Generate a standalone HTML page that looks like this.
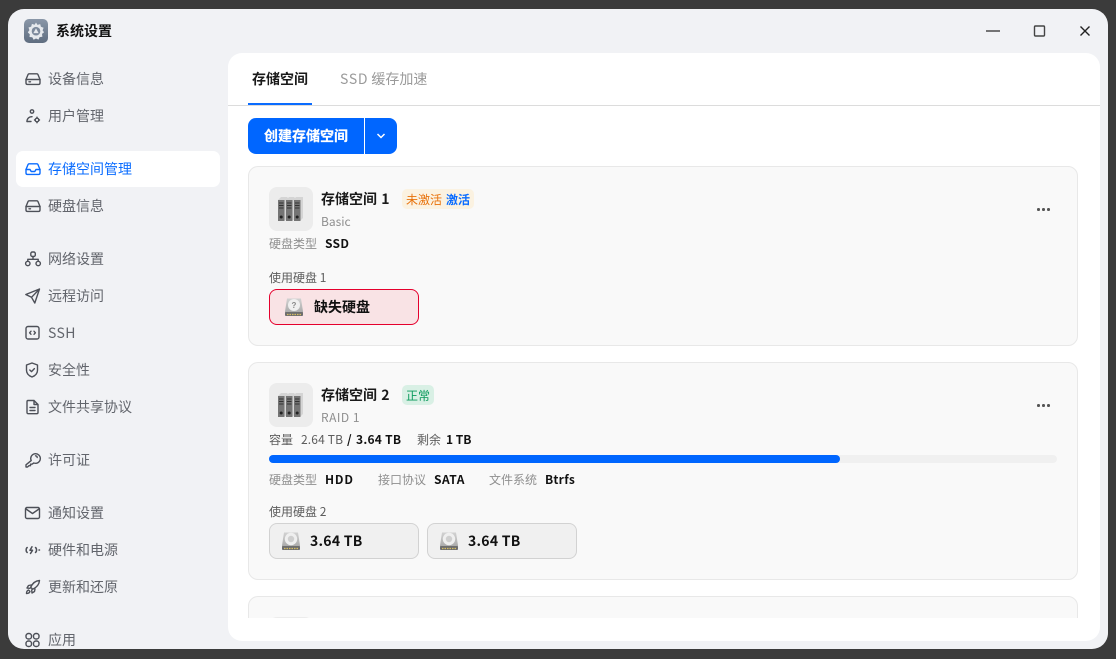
<!DOCTYPE html>
<html lang="zh"><head><meta charset="utf-8"><title>系统设置</title>
<style>
*{box-sizing:border-box;margin:0;padding:0}
html,body{width:1116px;height:659px;overflow:hidden;background:#3b3b3b;font-family:"Noto Sans CJK SC","Liberation Sans",sans-serif}
.abs,.t,svg.i{position:absolute}
.t{white-space:nowrap;line-height:20px;height:20px}
#win{position:absolute;left:8px;top:9px;width:1100px;height:640px;background:#f1f2f5;border-radius:16px;overflow:hidden}
#root{position:absolute;left:0;top:0;width:1116px;height:659px}
.nav{font-size:14px;color:#62656c;left:48px}
svg.i{width:18px;height:18px;left:24px;fill:none;stroke:#4d5058;stroke-width:1.4;stroke-linecap:round;stroke-linejoin:round}
#panel{position:absolute;left:228px;top:53px;width:872px;height:588px;background:#fff;border-radius:14px;overflow:hidden}
.card{position:absolute;left:248px;width:830px;background:#f9f9f9;border:1px solid #e8e8e8;border-radius:10px}
.g{font-size:12px;color:#8f8f8f}
.d{font-size:12px;color:#5c5c5c}
.b{font-size:12px;color:#111;font-weight:700;letter-spacing:.5px}
.title{font-size:14px;color:#1a1a1a;font-weight:700}
.ic{position:absolute;left:269px;width:44px;height:44px;background:#ececec;border-radius:8px}
.disk{position:absolute;height:36px;width:150px;border-radius:8px;border:1px solid #d2d2d2;background:#f0f0f0}
.dots{position:absolute;left:1037px;width:2.5px;height:2.5px;border-radius:50%;background:#555;box-shadow:5px 0 0 #555,10px 0 0 #555}
.num{font-size:14px;color:#111;font-weight:700;letter-spacing:.25px}
</style></head><body>
<div id="root">
<div id="win"></div>

<!-- title bar -->
<svg class="abs" style="left:24px;top:19px" width="24" height="24" viewBox="0 0 24 24">
<defs>
<linearGradient id="ag" x1="0" y1="0" x2="0" y2="1"><stop offset="0" stop-color="#8a97a8"/><stop offset="1" stop-color="#5f6d80"/></linearGradient>
<linearGradient id="dg" x1="0" y1="0" x2="0" y2="1"><stop offset="0" stop-color="#d2d2d2"/><stop offset="1" stop-color="#a2a2a2"/></linearGradient>
</defs>
<rect width="24" height="24" rx="5" fill="url(#ag)"/>
<path d="M12 3.500l1.500 2.400 2.700-.8.7 2.700 2.700 1-1 2.600 1.500 1.800-2.100 1.700.4 2.800-2.800.4-1.100 2.500-2.500-1.100-2.400 1.300-1.300-2.500-2.800-.3.300-2.800-2-1.800 1.600-2.300-.9-2.600 2.700-.9.700-2.700 2.700.8z" fill="#e6e9ed"/>
<circle cx="12" cy="12.200" r="4.300" fill="#7c899b"/><path d="M12 9.200l2.600 4.900h-5.200z" fill="#e6e9ed"/>
</svg>
<div class="t" style="left:56px;top:21px;font-size:14px;color:#111;font-weight:700">系统设置</div>
<svg class="abs" style="left:980px;top:20px" width="120" height="22" viewBox="0 0 120 22" fill="none">
<path d="M6 11h14" stroke="#555" stroke-width="1.600"/>
<rect x="54.500" y="6" width="10" height="10" rx="1" stroke="#444" stroke-width="1.400"/>
<path d="M100.500 6.500l9 9M109.500 6.500l-9 9" stroke="#222" stroke-width="1.400"/>
</svg>

<!-- sidebar -->
<div class="abs" style="left:16px;top:151px;width:204px;height:36px;background:#fff;border-radius:7px"></div>

<svg class="i" style="top:70px" viewBox="0 0 18 18"><path d="M2 9.500L4 4.600c.2-.5.6-.8 1.200-.8h7.600c.6 0 1 .3 1.200.8l2 4.900v3.500c0 .8-.6 1.400-1.400 1.400H3.400c-.8 0-1.400-.6-1.400-1.400z"/><path d="M2 9.500h14M5 11.800h1.500"/></svg>
<div class="t nav" style="top:69px">设备信息</div>
<svg class="i" style="top:107px" viewBox="0 0 18 18"><circle cx="8" cy="4.500" r="1.700"/><path d="M3 14.500c0-2.800 2-4.800 5-4.800"/><path d="M3 14.500h4"/><circle cx="13" cy="13" r="1.800"/><path d="M13 10.200v.9M13 14.900v.9M10.500 13h.7M14.800 13h.7"/></svg>
<div class="t nav" style="top:106px">用户管理</div>
<svg class="i" style="top:160px;stroke:#0a6cff" viewBox="0 0 18 18"><path d="M2 9.500L4 4.600c.2-.5.6-.8 1.200-.8h7.600c.6 0 1 .3 1.200.8l2 4.900v3.500c0 .8-.6 1.400-1.400 1.400H3.400c-.8 0-1.400-.6-1.400-1.400z"/><path d="M2 9.500h4l1.200 2h3.600l1.200-2h4"/></svg>
<div class="t nav" style="top:159px;color:#0a6cff">存储空间管理</div>
<svg class="i" style="top:197px" viewBox="0 0 18 18"><path d="M2 9.500L4 4.600c.2-.5.6-.8 1.200-.8h7.600c.6 0 1 .3 1.200.8l2 4.900v3.500c0 .8-.6 1.400-1.400 1.400H3.400c-.8 0-1.400-.6-1.400-1.400z"/><path d="M2 9.500h14M5 11.800h1.500"/></svg>
<div class="t nav" style="top:196px">硬盘信息</div>

<svg class="i" style="top:250px" viewBox="0 0 18 18"><rect x="6.800" y="2" width="4.500" height="4.500" rx="1.500"/><circle cx="3.800" cy="13.500" r="2.200"/><circle cx="14.200" cy="13.500" r="2.200"/><path d="M9 6.500v2.800M3.800 11.300V9.300h10.400v2"/></svg>
<div class="t nav" style="top:249px">网络设置</div>
<svg class="i" style="top:287px" viewBox="0 0 18 18"><path d="M15.500 2L1.800 7.500l5.700 2.800L10.800 16zM15.500 2L7.500 10.300"/></svg>
<div class="t nav" style="top:286px">远程访问</div>
<svg class="i" style="top:324px" viewBox="0 0 18 18"><rect x="2" y="2.500" width="13" height="12.500" rx="2"/><path d="M7 7.200L5.600 8.800 7 10.300M10 7.200l1.400 1.600L10 10.300"/></svg>
<div class="t nav" style="top:323px;letter-spacing:.4px">SSH</div>
<svg class="i" style="top:361px" viewBox="0 0 18 18"><path d="M8 2l5.500 2v5.200c0 3.200-2.300 5.500-5.500 6.800-3.200-1.300-5.500-3.600-5.500-6.800V4z"/><path d="M5.800 9l1.700 1.600 2.900-3"/></svg>
<div class="t nav" style="top:360px">安全性</div>
<svg class="i" style="top:398px" viewBox="0 0 18 18"><path d="M4 2.500h6l4 4v8c0 .7-.5 1.200-1.200 1.200H4.200c-.7 0-1.200-.5-1.200-1.200V3.700C3 3 3.400 2.500 4 2.500zM10 2.500v4h4M6 9.500h5M6 12.500h5"/></svg>
<div class="t nav" style="top:397px">文件共享协议</div>

<svg class="i" style="top:451px" viewBox="0 0 18 18"><path d="M7.200 9.600A4.800 4.800 0 1 1 9.800 12L8 13.200H6.500v1.500H5L3.500 16H2v-2.200z"/><path d="M11.500 4.800a1.800 1.800 0 0 1 1.700 1.700"/></svg>
<div class="t nav" style="top:450px">许可证</div>
<svg class="i" style="top:504px" viewBox="0 0 18 18"><rect x="1.500" y="3.500" width="14" height="11" rx="1.500"/><path d="M2 5l6.500 4.500L15 5"/></svg>
<div class="t nav" style="top:503px">通知设置</div>
<svg class="i" style="top:541px;stroke-width:1.500" viewBox="0 0 18 18"><path d="M3.200 6.500C1.800 7.500 1.800 10.500 3.200 11.500M11.500 6.500c1.400 1 1.400 4 0 5M8 5.800L6 9.300h2.500L6.500 12.500"/><path d="M15 9h.5"/></svg>
<div class="t nav" style="top:540px">硬件和电源</div>
<svg class="i" style="top:578px" viewBox="0 0 18 18"><path d="M15.500 2.500c-4 .3-7 2.800-8.800 6.700l2 2c3.900-1.800 6.500-4.800 6.800-8.700zM7 7L4.500 7.500 3 10l3 .3M11 11l-.5 2.500L8 15l-.3-3"/><path d="M4.500 12c-1.300.5-2 2-2 3.500 1.500 0 3-.7 3.500-2z"/></svg>
<div class="t nav" style="top:577px">更新和还原</div>
<svg class="i" style="top:631px" viewBox="0 0 18 18"><rect x="2" y="2.500" width="5.500" height="5.500" rx="2.400"/><rect x="9.500" y="2.500" width="5.500" height="5.500" rx="2.400"/><rect x="2" y="10" width="5.500" height="5.500" rx="2.400"/><rect x="9.500" y="10" width="5.500" height="5.500" rx="2.400"/></svg>
<div class="t nav" style="top:630px">应用</div>
<div class="abs" style="left:0;top:649px;width:1116px;height:10px;background:#3b3b3b"></div>

<!-- panel -->
<div id="panel"></div>
<div class="t" style="left:252px;top:69px;font-size:14px;color:#1a1a1a;font-weight:700">存储空间</div>
<div class="t" style="left:340px;top:69px;font-size:14px;color:#9a9a9a"><span style="letter-spacing:.7px">SSD</span> 缓存加速</div>
<div class="abs" style="left:228px;top:105px;width:872px;height:1px;background:#dcdcdc"></div>
<div class="abs" style="left:248px;top:103px;width:64px;height:2px;background:#0a6cff"></div>

<div class="abs" style="left:248px;top:118px;width:116px;height:36px;background:#0066ff;border-radius:8px 0 0 8px"></div>
<div class="abs" style="left:365px;top:118px;width:32px;height:36px;background:#0066ff;border-radius:0 8px 8px 0"></div>
<div class="t" style="left:264px;top:126px;font-size:14px;color:#fff;font-weight:700;-webkit-text-stroke:.2px #fff">创建存储空间</div>
<svg class="abs" style="left:376px;top:132px" width="10" height="8" viewBox="0 0 10 8" fill="none"><path d="M1.500 2l3.500 3.500L8.500 2" stroke="#fff" stroke-width="1.500"/></svg>

<!-- card 1 -->
<div class="card" style="top:166px;height:180px"></div>
<div class="ic" style="top:187px"></div>
<svg class="abs" style="left:277px;top:196px" width="28" height="26" viewBox="0 0 28 26">
<path d="M1 4l3-3h6l1 1 1-1h5l1 1 1-1h7v21l-2 2H1z" fill="#d4d4d4"/>
<rect x="1" y="4" width="6.500" height="21" fill="#747474"/><rect x="9" y="4" width="6.500" height="21" fill="#747474"/><rect x="17" y="4" width="6.500" height="21" fill="#747474"/>
<path d="M2 7h4.500M2 9.500h4.500M2 12h4.500M10 7h4.500M10 9.500h4.500M10 12h4.500M18 7h4.500M18 9.500h4.500M18 12h4.500" stroke="#333" stroke-width="1"/>
<circle cx="4.200" cy="21" r="1.500" fill="#222"/><circle cx="12.200" cy="21" r="1.500" fill="#222"/><circle cx="20.200" cy="21" r="1.500" fill="#222"/></svg>
<div class="t title" style="left:321px;top:189px">存储空间 <span style="letter-spacing:0;margin-left:1px">1</span></div>
<div class="abs" style="left:402px;top:189px;width:72px;height:20px;background:#fbf2e1;border-radius:5px"></div>
<div class="t" style="left:406px;top:190px;font-size:12px;color:#e8710a">未激活</div>
<div class="t" style="left:446px;top:190px;font-size:12px;color:#0a6cff;font-weight:700">激活</div>
<div class="t g" style="left:321px;top:212px">Basic</div>
<div class="dots" style="top:208px"></div>
<div class="t g" style="left:269px;top:234px">硬盘类型</div>
<div class="t b" style="left:325px;top:234px;letter-spacing:.3px">SSD</div>
<div class="t d" style="left:269px;top:268px">使用硬盘 1</div>
<div class="disk" style="left:269px;top:289px;background:#f9e3e5;border-color:#e5002d"></div>
<svg class="abs" style="left:284px;top:298px" width="20" height="19" viewBox="0 0 20 19"><path d="M3 0.500h14l2 13v4H1v-4z" fill="url(#dg)"/><rect x="1" y="14" width="18" height="4" rx="1" fill="#6e6e6e"/><path d="M3 16.500h14" stroke="#d6bd62" stroke-width="1.200" stroke-dasharray="1.500 1"/><circle cx="10" cy="7" r="6" fill="#efefef"/><text x="10" y="10" text-anchor="middle" font-size="8" font-weight="700" font-family="Liberation Sans" fill="#888">?</text></svg>
<div class="t" style="left:314px;top:297px;font-size:14px;color:#111;font-weight:700">缺失硬盘</div>

<!-- card 2 -->
<div class="card" style="top:362px;height:218px"></div>
<div class="ic" style="top:383px"></div>
<svg class="abs" style="left:277px;top:392px" width="28" height="26" viewBox="0 0 28 26">
<path d="M1 4l3-3h6l1 1 1-1h5l1 1 1-1h7v21l-2 2H1z" fill="#d4d4d4"/>
<rect x="1" y="4" width="6.500" height="21" fill="#747474"/><rect x="9" y="4" width="6.500" height="21" fill="#747474"/><rect x="17" y="4" width="6.500" height="21" fill="#747474"/>
<path d="M2 7h4.500M2 9.500h4.500M2 12h4.500M10 7h4.500M10 9.500h4.500M10 12h4.500M18 7h4.500M18 9.500h4.500M18 12h4.500" stroke="#333" stroke-width="1"/>
<circle cx="4.200" cy="21" r="1.500" fill="#222"/><circle cx="12.200" cy="21" r="1.500" fill="#222"/><circle cx="20.200" cy="21" r="1.500" fill="#222"/></svg>
<div class="t title" style="left:321px;top:385px">存储空间 <span style="margin-left:1px">2</span></div>
<div class="abs" style="left:402px;top:385px;width:32px;height:20px;background:#d9f0e5;border-radius:5px"></div>
<div class="t" style="left:406px;top:386px;font-size:12px;color:#0a9a5c">正常</div>
<div class="t g" style="left:321px;top:408px;letter-spacing:.5px">RAID 1</div>
<div class="dots" style="top:404px"></div>
<div class="t d" style="left:269px;top:430px">容量</div>
<div class="t d" style="left:301px;top:430px;letter-spacing:.15px">2.64 TB</div>
<div class="t b" style="left:347px;top:430px">/</div>
<div class="t b" style="left:356px;top:430px;letter-spacing:.25px">3.64 TB</div>
<div class="t d" style="left:417px;top:430px">剩余</div>
<div class="t b" style="left:446px;top:430px;letter-spacing:0">1 TB</div>
<div class="abs" style="left:269px;top:455px;width:788px;height:8px;background:#f0f0f0;border-radius:4px"></div>
<div class="abs" style="left:269px;top:455px;width:571px;height:8px;background:#0066ff;border-radius:4px"></div>
<div class="t g" style="left:269px;top:470px">硬盘类型</div><div class="t b" style="left:325px;top:470px;letter-spacing:.85px">HDD</div>
<div class="t g" style="left:378px;top:470px">接口协议</div><div class="t b" style="left:434px;top:470px">SATA</div>
<div class="t g" style="left:489px;top:470px">文件系统</div><div class="t b" style="left:545px;top:470px;letter-spacing:.3px">Btrfs</div>
<div class="t d" style="left:269px;top:502px">使用硬盘 2</div>
<div class="disk" style="left:269px;top:523px"></div>
<div class="disk" style="left:427px;top:523px"></div>
<svg class="abs" style="left:281px;top:532px" width="20" height="19" viewBox="0 0 20 19"><path d="M3 0.500h14l2 13v4H1v-4z" fill="url(#dg)"/><rect x="1" y="14" width="18" height="4" rx="1" fill="#6e6e6e"/><path d="M3 16.500h14" stroke="#d6bd62" stroke-width="1.200" stroke-dasharray="1.500 1"/><circle cx="10" cy="7" r="6.200" fill="#efefef"/><circle cx="10" cy="7" r="3.200" fill="#cfcfcf"/></svg>
<svg class="abs" style="left:439px;top:532px" width="20" height="19" viewBox="0 0 20 19"><path d="M3 0.500h14l2 13v4H1v-4z" fill="url(#dg)"/><rect x="1" y="14" width="18" height="4" rx="1" fill="#6e6e6e"/><path d="M3 16.500h14" stroke="#d6bd62" stroke-width="1.200" stroke-dasharray="1.500 1"/><circle cx="10" cy="7" r="6.200" fill="#efefef"/><circle cx="10" cy="7" r="3.200" fill="#cfcfcf"/></svg>
<div class="t num" style="left:310px;top:531px">3.64 TB</div>
<div class="t num" style="left:468px;top:531px">3.64 TB</div>

<!-- card 3 clipped -->
<div class="abs" style="left:248px;top:596px;width:830px;height:22px;overflow:hidden">
<div class="card" style="left:0;top:0;height:60px;width:830px"></div>
<div class="abs" style="left:21px;top:21px;width:44px;height:44px;background:#ececec;border-radius:8px"></div>
</div>
</div>
</body></html>
